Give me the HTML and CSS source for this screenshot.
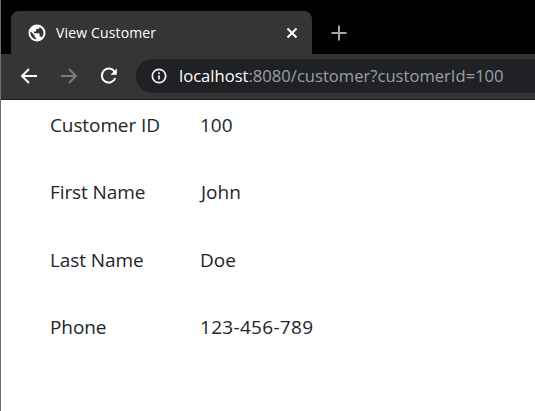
FILE: index.html
```html
<!DOCTYPE html>
<html lang="en">
<head>
<meta charset="utf-8">
<title>View Customer</title>
<link rel="stylesheet" href="styles.css">
</head>
<body>
<div class="window">
  <header class="chrome">
    <div class="tabstrip">
      <div class="tab">
        <svg class="globe" viewBox="0 0 18 18"><path fill="#fff" d="M9 .5a8.500 8.500 0 1 0 0 17 8.500 8.500 0 0 0 0-17zM2.300 9c0-.6.100-1.200.2-1.700L6.600 11.400v.8c0 .9.700 1.600 1.600 1.600v1.600A6.700 6.700 0 0 1 2.300 9zm11.600 4.500a1.600 1.600 0 0 0-1.500-1.100h-.8V10c0-.4-.4-.8-.8-.8H5.800V7.500h1.600c.4 0 .8-.4.800-.8V5h1.600c.9 0 1.600-.7 1.600-1.600v-.4a6.700 6.700 0 0 1 2.500 10.500z"/></svg>
        <span class="tab-title">View Customer</span>
        <svg class="close" viewBox="0 0 12 12"><path d="M1.500 1.500l9 9M10.500 1.500l-9 9"/></svg>
      </div>
      <svg class="plus" viewBox="0 0 16 16"><path d="M8 .5v15M.5 8h15"/></svg>
    </div>
    <div class="toolbar">
      <svg class="nav" viewBox="0 0 18 18"><path class="on" d="M17 9H2M9 2 2 9l7 7"/></svg>
      <svg class="nav" viewBox="0 0 18 18"><path class="off" d="M1 9h15M9 2l7 7-7 7"/></svg>
      <svg class="nav" viewBox="0 0 18 18"><path class="on" d="M15.300 11.200A7 7 0 1 1 14.600 4.600"/><path class="tip" d="M16.800 1.500v6.300h-6.300z"/></svg>
      <div class="omnibox">
        <svg class="info" viewBox="0 0 16 16"><circle cx="8" cy="8" r="6.700"/><path d="M8 7.200v4.300M8 4.200v1.700"/></svg>
        <span class="url"><span class="host">localhost</span>:8080/customer?customerId=100</span>
      </div>
    </div>
  </header>
  <main class="details">
    <div class="row"><span class="label">Customer ID</span><span>100</span></div>
    <div class="row"><span class="label">First Name</span><span class="name">John</span></div>
    <div class="row"><span class="label">Last Name</span><span>Doe</span></div>
    <div class="row"><span class="label">Phone</span><span class="phone">123-456-789</span></div>
  </main>
</div>
</body>
</html>
```
FILE: styles.css
```css
* { box-sizing: border-box; }
html, body { margin: 0; height: 100%; overflow: hidden; background: #fff; }
.window { height: 411px; border-left: 1px solid #6e6e6e; font-family: "Open Sans", "Noto Sans", sans-serif; }
.chrome { height: 100px; background: #000; display: flex; flex-direction: column; }
.tabstrip { height: 54px; padding: 11px 0 0 10px; display: flex; align-items: flex-start; flex: none; }
.tab { width: 301px; height: 43px; background: #353535; border-radius: 8px 8px 0 0; display: flex; align-items: center; padding: 0 0 0 17px; position: relative; }
.globe { width: 18px; height: 18px; margin-right: 10px; flex: none; }
.tab-title { color: #fff; font-size: 14px; letter-spacing: .15px; flex: 1; }
.close { width: 12px; height: 12px; margin-right: 14px; fill: none; stroke: #fff; stroke-width: 2; }
.plus { width: 16px; height: 16px; margin: 14px 0 0 19px; fill: none; stroke: #a5a5a5; stroke-width: 2; }
.toolbar { height: 46px; padding: 0 0 2px 19px; background: #353535; border-bottom: 1px solid #1e1e1e; display: flex; align-items: center; flex: none; }
.nav { width: 18px; height: 18px; margin-right: 22px; fill: none; stroke-width: 2; flex: none; }
.on { stroke: #fff; }
.off { stroke: #7b7b7b; }
.tip { fill: #fff; stroke: none; }
.omnibox { flex: 1; height: 34px; margin-left: -4px; background: #202124; border-radius: 17px 0 0 17px; display: flex; align-items: center; padding-left: 15px; }
.info { width: 16px; height: 16px; margin-right: 12px; fill: none; stroke: #f1f3f4; stroke-width: 1.700; flex: none; }
.url { color: #9aa0a6; font-size: 16.600px; white-space: nowrap; }
.host { color: #fff; }
.details { padding: 13px 0 0 49px; color: #212529; font-size: 19px; }
.row { display: flex; height: 67.400px; line-height: 24px; }
.label { width: 150px; letter-spacing: -.1px; }
.name { padding-left: 1px; }
.phone { letter-spacing: .3px; }
```
